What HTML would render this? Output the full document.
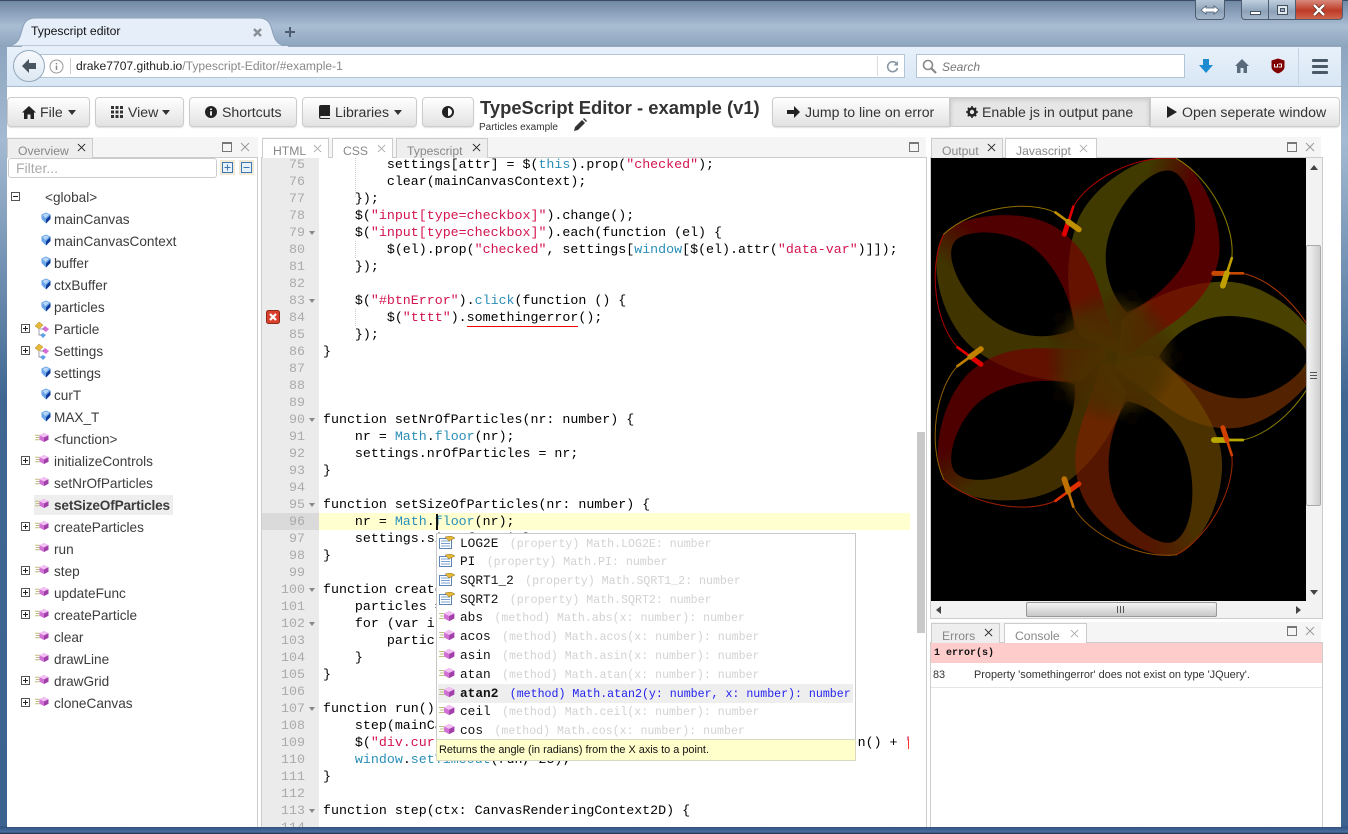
<!DOCTYPE html>
<html><head><meta charset="utf-8"><title>Typescript editor</title>
<style>
*{box-sizing:border-box}
html,body{margin:0;padding:0}
body{width:1348px;height:834px;overflow:hidden;position:relative;background:#fff;font-family:"Liberation Sans",sans-serif;color:#333}
.a,.a *{position:absolute}
div,span.a,svg{position:absolute}
.btn{top:97px;height:30px;background:linear-gradient(#fff,#e2e2e2);border:1px solid #ccc;border-radius:4px;font-size:14.1px;line-height:28px;color:#333;white-space:nowrap;box-shadow:0 1px 1px rgba(0,0,0,.12)}
.btn span{position:absolute;top:0}
.tab{top:138px;height:20px;background:#fff;border:1px solid #ccc;border-bottom:0;font-size:12.2px;line-height:24px;color:#888;padding-left:10px;white-space:nowrap}
.tab.on{background:#eee}
.x{position:absolute;top:3px;font-size:0}
.code,.code div{font-family:"Liberation Mono",monospace;font-size:13.3px;line-height:17px;white-space:pre;color:#000}
.ln{left:262px;width:43px;margin-top:-1px;text-align:right;font-family:"Liberation Mono",monospace;font-size:13.3px;line-height:17px;color:#aaa}
.s{color:#d3144f}.t{color:#2a8fb8}
.tr{left:54px;margin-top:1px;font-size:13.6px;line-height:18px;color:#3c3c3c;white-space:nowrap}
.row{left:438px;width:415px;height:19px;font-family:"Liberation Mono",monospace;font-size:12.8px;line-height:19px;white-space:pre;color:#111}
.row i{font-style:normal;font-size:11.6px;color:#d2d2d2;margin-left:-4px}
.row span{left:22px;top:0;position:absolute}
</style></head><body>
<svg width="0" height="0" style="position:absolute">
<defs>
<symbol id="var" viewBox="0 0 10 12"><path d="M5 .5L9.5 2.5V7L5 11.5 .5 7V2.5Z" fill="#6aa6e8"/><path d="M9.5 3V7L5 11.5V7.5Z" fill="#0d3a96"/><path d="M1.5 3L5 1.5 8 2.8 4.5 6Z" fill="#b8d6f7"/></symbol>
<symbol id="meth" viewBox="0 0 20 14"><path d="M0 4H6M1 7H6M0 10H6" stroke="#bdbd80" stroke-width="1.2"/><path d="M12 1L18 4V10L12 13 6 10V4Z" fill="#d070d4"/><path d="M12 1L18 4 12 7 6 4Z" fill="#f2c0f2"/><path d="M12 7L18 4V10L12 13Z" fill="#a040a8"/></symbol>
<symbol id="cls" viewBox="0 0 16 16"><path d="M1 4L5 0 9 3 5 7Z" fill="#e5b83a" stroke="#a88520" stroke-width=".5"/><path d="M11 4L15 7 12 10 8 7Z" fill="#d66bd6"/><path d="M9 11L12 13 9 16 6 13Z" fill="#5f9fe5"/><path d="M5 7V13H7M6 7L10 7" stroke="#778" stroke-width=".7" fill="none"/></symbol>
<symbol id="prop" viewBox="0 0 16 13"><rect x=".5" y="2.5" width="12" height="10" fill="#fff" stroke="#5c85b5"/><path d="M2 5H11M2 7.5H11M2 10H11" stroke="#7aa0cf" stroke-width="1"/><path d="M6 1L12 0 16 2 10 5Z" fill="#e5b83a" stroke="#8a6d18" stroke-width=".5"/></symbol>
<symbol id="plus" viewBox="0 0 9 9"><rect x=".5" y=".5" width="8" height="8" fill="#fff" stroke="#555"/><path d="M2 4.5H7M4.5 2V7" stroke="#222"/></symbol>
<symbol id="minus" viewBox="0 0 9 9"><rect x=".5" y=".5" width="8" height="8" fill="#fff" stroke="#555"/><path d="M2 4.5H7" stroke="#222"/></symbol>
<symbol id="xx" viewBox="0 0 10 10"><path d="M1 1L9 9M9 1L1 9" stroke="currentColor" stroke-width="1" fill="none"/></symbol>
<symbol id="max" viewBox="0 0 10 10"><rect x=".5" y=".5" width="9" height="9" fill="none" stroke="#777"/><path d="M0 1.5H10" stroke="#777"/></symbol>
<linearGradient id="g0" gradientUnits="userSpaceOnUse" x1="0" y1="-70" x2="0" y2="70"><stop offset="0" stop-color="#6a6000"/><stop offset="1" stop-color="#7a3200"/></linearGradient>
<linearGradient id="g1" gradientUnits="userSpaceOnUse" x1="0" y1="-70" x2="0" y2="70"><stop offset="0" stop-color="#5f5400"/><stop offset="1" stop-color="#7c0000"/></linearGradient>
<linearGradient id="g2" gradientUnits="userSpaceOnUse" x1="0" y1="-70" x2="0" y2="70"><stop offset="0" stop-color="#5e4c00"/><stop offset="1" stop-color="#760000"/></linearGradient>
<linearGradient id="g3" gradientUnits="userSpaceOnUse" x1="0" y1="-70" x2="0" y2="70"><stop offset="0" stop-color="#604400"/><stop offset="1" stop-color="#720000"/></linearGradient>
<linearGradient id="g4" gradientUnits="userSpaceOnUse" x1="0" y1="-70" x2="0" y2="70"><stop offset="0" stop-color="#6e4800"/><stop offset="1" stop-color="#7c2000"/></linearGradient>
<radialGradient id="cg"><stop offset="0" stop-color="#4a3400" stop-opacity=".95"/><stop offset=".7" stop-color="#463000" stop-opacity=".7"/><stop offset="1" stop-color="#3a2a00" stop-opacity="0"/></radialGradient>
<path id="petal" fill-rule="evenodd" d="M30-110C120-190 240-225 340-225 470-225 625-90 625 0 625 70 480 215 350 215 270 215 210 185 150 140 110 110 60 70 10 40ZM140 0C180-70 260-122 350-122 460-122 585-60 585 0 585 50 480 125 390 125 300 125 200 70 140 0Z"/>
</defs></svg>

<!-- window chrome -->
<div style="left:0;top:0;width:1348px;height:834px;background:linear-gradient(#6f86a2 0,#a9bdd3 26px,#8ea5bf 46px,#a4bad2 140px,#3f6792 400px,#3c6290 826px,#2f5280 827px,#4a6fa0 832px,#1a2a40 834px)"></div>
<div style="left:0;top:0;width:1348px;height:1px;background:#3c4d63"></div>
<!-- title tab -->
<svg style="left:0;top:0" width="300" height="47"><path d="M6 46C18 46 20 38 22 30 24 22 27 18 36 18H258C267 18 270 22 272 30 274 38 276 46 288 46Z" fill="#e6eff9" stroke="#8ba1b9"/></svg>
<div class="a" style="left:31px;top:23px;font-size:12.2px;line-height:16px;color:#111;white-space:nowrap">Typescript editor</div>
<svg style="left:252px;top:27px;color:#888" width="11" height="11"><path d="M2 2L9 9M9 2L2 9" stroke="#8a8f96" stroke-width="2.4"/></svg>
<svg style="left:284px;top:26px" width="12" height="12"><path d="M6 1V11M1 6H11" stroke="#4d5c6e" stroke-width="2"/></svg>
<!-- window buttons -->
<div style="left:1195px;top:0;width:30px;height:20px;background:linear-gradient(#b5c5d6,#8da2b8 60%,#a5b7c9);border:1px solid #4c5d70;border-top:0;border-radius:0 0 4px 4px"></div>
<svg style="left:1200px;top:4px" width="20" height="12"><path d="M1 6L6 2V4H14V2L19 6 14 10V8H6V10Z" fill="#fff" stroke="#4c5d70" stroke-width=".8"/></svg>
<div style="left:1241px;top:0;width:28px;height:20px;background:linear-gradient(#c0cfdf,#8da2b8 60%,#a5b7c9);border:1px solid #4c5d70;border-top:0;border-radius:0 0 0 4px"></div>
<div style="left:1269px;top:0;width:27px;height:20px;background:linear-gradient(#c0cfdf,#8da2b8 60%,#a5b7c9);border:1px solid #4c5d70;border-top:0;border-left:0"></div>
<div style="left:1296px;top:0;width:47px;height:20px;background:linear-gradient(#d98a7c,#bd3a26 55%,#d0654e);border:1px solid #4c5d70;border-top:0;border-left:0;border-radius:0 0 4px 0"></div>
<div style="left:1250px;top:11px;width:11px;height:4px;background:#fff;border:1px solid #44505e"></div>
<div style="left:1277px;top:5px;width:11px;height:10px;background:#dfe7ef;border:1px solid #44505e"></div>
<div style="left:1280px;top:8px;width:5px;height:4px;background:#9db0c3;border:1px solid #44505e"></div>
<svg style="left:1312px;top:4px" width="14" height="12"><path d="M2 1L12 11M12 1L2 11" stroke="#5a2a22" stroke-width="4"/><path d="M2 1L12 11M12 1L2 11" stroke="#fff" stroke-width="2.4"/></svg>
<!-- nav bar -->
<div style="left:7px;top:46px;width:1334px;height:41px;background:linear-gradient(#e8f1fb,#d8e6f4);border-top:1px solid #94a8be;border-bottom:1px solid #a9bccf"></div>
<div style="left:288px;top:45px;width:1053px;height:1px;background:#8ba1b9"></div>
<div style="left:22px;top:46px;width:266px;height:2px;background:#e6eff9"></div>
<div style="left:40px;top:54px;width:865px;height:24px;background:#fff;border:1px solid #b3c6d8"></div>
<div style="left:13px;top:50px;width:32px;height:32px;border-radius:50%;background:linear-gradient(#f6f9fc,#dde8f3);border:1px solid #93a7bc"></div>
<svg style="left:20px;top:58px" width="17" height="16"><path d="M9 1L2 8 9 15V11H16V5H9Z" fill="#4a5562"/></svg>
<svg style="left:49px;top:59px" width="15" height="15"><circle cx="7.5" cy="7.5" r="6.5" fill="none" stroke="#999"/><path d="M7.5 4V5.4M7.5 6.6V11" stroke="#888" stroke-width="1.5"/></svg>
<div style="left:70px;top:58px;width:1px;height:16px;background:#ccc"></div>
<div class="a" style="left:76px;top:58px;font-size:12.1px;line-height:16px;color:#888;white-space:nowrap"><span style="position:static;color:#222">drake7707.github.io</span>/Typescript-Editor/#example-1</div>
<div style="left:877px;top:56px;width:1px;height:20px;background:#ddd"></div>
<svg style="left:886px;top:60px" width="13" height="13"><path d="M10.5 3.5A5 5 0 1 0 11.5 8" fill="none" stroke="#8a97a5" stroke-width="1.6"/><path d="M12 1V5.5H7.5Z" fill="#8a97a5"/></svg>
<div style="left:916px;top:54px;width:269px;height:24px;background:#fff;border:1px solid #b3c6d8"></div>
<svg style="left:922px;top:59px" width="15" height="15"><circle cx="6" cy="6" r="4.5" fill="none" stroke="#888" stroke-width="1.6"/><path d="M9.5 9.5L14 14" stroke="#888" stroke-width="2.2"/></svg>
<div class="a" style="left:942px;top:59px;font-size:12px;line-height:16px;font-style:italic;color:#777">Search</div>
<svg style="left:1198px;top:58px" width="16" height="16"><path d="M5 1H11V7H15L8 15 1 7H5Z" fill="#1c8bd1"/></svg>
<svg style="left:1234px;top:58px" width="16" height="16"><path d="M8 1L1 8H3V15H6.5V10H9.5V15H13V8H15Z" fill="#5a6a7a"/></svg>
<svg style="left:1271px;top:58px" width="14" height="16"><path d="M7 .5L13.5 2.5V9C13.5 12 10 14.500 7 15.500 4 14.500 .5 12 .5 9V2.500Z" fill="#800000"/><path d="M3.500 6V9H6.500V6M7.500 9H10.500V6H7.500" stroke="#eee" fill="none"/></svg>
<div style="left:1298px;top:48px;width:1px;height:37px;background:#c5d4e3"></div>
<div style="left:1312px;top:59px;width:16px;height:3px;background:#4a5968;border-radius:1px"></div>
<div style="left:1312px;top:65px;width:16px;height:3px;background:#4a5968;border-radius:1px"></div>
<div style="left:1312px;top:71px;width:16px;height:3px;background:#4a5968;border-radius:1px"></div>

<!-- page -->
<div style="left:7px;top:87px;width:1334px;height:740px;background:#fff"></div>
<!-- toolbar -->
<div class="btn" style="left:7px;width:83px"><svg style="left:14px;top:8px" width="14" height="13"><path d="M7 0L0 6.500H2V13H5.500V8.500H8.500V13H12V6.500H14Z" fill="#222"/></svg><span style="left:32px">File</span><svg style="left:60px;top:12px" width="8" height="5"><path d="M0 0H8L4 5Z" fill="#333"/></svg></div>
<div class="btn" style="left:95px;width:89px"><svg style="left:15px;top:8px" width="12" height="12"><path d="M0 0H3V3H0ZM4.500 0H7.500V3H4.500ZM9 0H12V3H9ZM0 4.500H3V7.500H0ZM4.500 4.500H7.500V7.500H4.500ZM9 4.500H12V7.500H9ZM0 9H3V12H0ZM4.500 9H7.500V12H4.500ZM9 9H12V12H9Z" fill="#333"/></svg><span style="left:32px">View</span><svg style="left:66px;top:12px" width="8" height="5"><path d="M0 0H8L4 5Z" fill="#333"/></svg></div>
<div class="btn" style="left:189px;width:108px"><svg style="left:15px;top:8px" width="12" height="12"><circle cx="6" cy="6" r="6" fill="#222"/><path d="M6 2.500V4M6 5.200V9.500" stroke="#fff" stroke-width="1.800"/></svg><span style="left:32px">Shortcuts</span></div>
<div class="btn" style="left:302px;width:115px"><svg style="left:16px;top:7px" width="11" height="14"><path d="M2 0H11V11H2.500C1.500 11 1 11.500 1 12S1.500 13 2.500 13H11V14H2C.8 14 0 13.200 0 12V2C0 .8.800 0 2 0Z" fill="#222"/></svg><span style="left:32px">Libraries</span><svg style="left:91px;top:12px" width="8" height="5"><path d="M0 0H8L4 5Z" fill="#333"/></svg></div>
<div class="btn" style="left:422px;width:52px"><svg style="left:19px;top:8px" width="12" height="12"><circle cx="6" cy="6" r="5" fill="#fff" stroke="#222" stroke-width="2"/><path d="M6 1A5 5 0 0 0 6 11Z" fill="#222"/></svg></div>
<div class="a" style="left:480px;top:96px;font-size:18.4px;line-height:24px;font-weight:bold;color:#333;white-space:nowrap">TypeScript Editor - example (v1)</div>
<div class="a" style="left:479px;top:121px;font-size:10px;line-height:13px;color:#333;white-space:nowrap">Particles example</div>
<svg style="left:573px;top:118px" width="14" height="14"><path d="M1 13L2 9 9 2 12 5 5 12Z" fill="#333"/><path d="M10 1L11 0 14 3 13 4Z" fill="#333"/></svg>
<div class="btn" style="left:772px;width:178px;border-radius:4px 0 0 4px"><svg style="left:14px;top:8px" width="13" height="12"><path d="M7 0L13 6 7 12V8H0V4H7Z" fill="#222"/></svg><span style="left:32px">Jump to line on error</span></div>
<div class="btn" style="left:950px;width:200px;border-radius:0;background:#e6e6e6;box-shadow:inset 0 2px 4px rgba(0,0,0,.12)"><svg style="left:15px;top:8px" width="12" height="12"><circle cx="6" cy="6" r="3.500" fill="none" stroke="#222" stroke-width="2.600"/><path d="M6 0V12M0 6H12M1.800 1.800L10.200 10.200M10.200 1.800L1.800 10.200" stroke="#222" stroke-width="1.500" stroke-dasharray="2 8 2 0"/></svg><span style="left:31px">Enable js in output pane</span></div>
<div class="btn" style="left:1150px;width:190px;border-radius:0 4px 4px 0"><svg style="left:16px;top:8px" width="10" height="12"><path d="M0 0L10 6 0 12Z" fill="#222"/></svg><span style="left:31px">Open seperate window</span></div>

<!-- Overview panel -->
<div style="left:7px;top:137px;width:251px;height:20px;background:#f5f5f5"></div>
<div style="left:7px;top:157px;width:251px;height:670px;background:#fff;border-top:1px solid #ccc;border-right:1px solid #ccc"></div>
<div class="tab on" style="left:7px;width:86px">Overview<svg class="x" style="left:69px;top:4px;color:#222" width="9" height="9"><use href="#xx"/></svg></div>
<svg style="left:222px;top:142px" width="10" height="10"><use href="#max"/></svg>
<svg style="left:240px;top:142px;color:#999" width="10" height="10"><use href="#xx"/></svg>
<div style="left:8px;top:158px;width:209px;height:20px;background:#fff;border:1px solid #ccc;border-radius:3px;font-size:14px;line-height:18px;color:#aaa;padding-left:7px">Filter...</div>
<div style="left:220px;top:160px;width:15px;height:15px;background:#f3ead6"></div><svg style="left:222px;top:162px" width="11" height="11"><rect x=".5" y=".5" width="10" height="10" fill="#e9f1fa" stroke="#3c76b2"/><path d="M2.500 5.500H8.500M5.500 2.500V8.500" stroke="#3c76b2"/></svg>
<div style="left:239px;top:160px;width:15px;height:15px;background:#f3ead6"></div><svg style="left:241px;top:162px" width="11" height="11"><rect x=".5" y=".5" width="10" height="10" fill="#e9f1fa" stroke="#3c76b2"/><path d="M2.500 5.500H8.500" stroke="#3c76b2"/></svg>

<svg style="left:11px;top:192px" width="9" height="9"><use href="#minus"/></svg>
<div class="tr" style="left:45px;top:188px">&lt;global&gt;</div>
<svg style="left:41px;top:212px" width="10" height="12"><use href="#var"/></svg><div class="tr" style="top:210px">mainCanvas</div>
<svg style="left:41px;top:234px" width="10" height="12"><use href="#var"/></svg><div class="tr" style="top:232px">mainCanvasContext</div>
<svg style="left:41px;top:256px" width="10" height="12"><use href="#var"/></svg><div class="tr" style="top:254px">buffer</div>
<svg style="left:41px;top:278px" width="10" height="12"><use href="#var"/></svg><div class="tr" style="top:276px">ctxBuffer</div>
<svg style="left:41px;top:300px" width="10" height="12"><use href="#var"/></svg><div class="tr" style="top:298px">particles</div>
<svg style="left:21px;top:324px" width="9" height="9"><use href="#plus"/></svg><svg style="left:34px;top:322px" width="16" height="16"><use href="#cls"/></svg><div class="tr" style="top:320px">Particle</div>
<svg style="left:21px;top:346px" width="9" height="9"><use href="#plus"/></svg><svg style="left:34px;top:344px" width="16" height="16"><use href="#cls"/></svg><div class="tr" style="top:342px">Settings</div>
<svg style="left:41px;top:366px" width="10" height="12"><use href="#var"/></svg><div class="tr" style="top:364px">settings</div>
<svg style="left:41px;top:388px" width="10" height="12"><use href="#var"/></svg><div class="tr" style="top:386px">curT</div>
<svg style="left:41px;top:410px" width="10" height="12"><use href="#var"/></svg><div class="tr" style="top:408px">MAX_T</div>
<svg style="left:35px;top:432px" width="15" height="11" viewBox="0 0 20 14"><use href="#meth"/></svg><div class="tr" style="top:430px">&lt;function&gt;</div>
<svg style="left:21px;top:456px" width="9" height="9"><use href="#plus"/></svg><svg style="left:35px;top:454px" width="15" height="11" viewBox="0 0 20 14"><use href="#meth"/></svg><div class="tr" style="top:452px">initializeControls</div>
<svg style="left:35px;top:476px" width="15" height="11" viewBox="0 0 20 14"><use href="#meth"/></svg><div class="tr" style="top:474px">setNrOfParticles</div>
<div style="left:34px;top:495px;width:139px;height:20px;background:#eee"></div>
<svg style="left:35px;top:498px" width="15" height="11" viewBox="0 0 20 14"><use href="#meth"/></svg><div class="tr" style="top:496px;font-weight:bold;letter-spacing:-.15px">setSizeOfParticles</div>
<svg style="left:21px;top:522px" width="9" height="9"><use href="#plus"/></svg><svg style="left:35px;top:520px" width="15" height="11" viewBox="0 0 20 14"><use href="#meth"/></svg><div class="tr" style="top:518px">createParticles</div>
<svg style="left:35px;top:542px" width="15" height="11" viewBox="0 0 20 14"><use href="#meth"/></svg><div class="tr" style="top:540px">run</div>
<svg style="left:21px;top:566px" width="9" height="9"><use href="#plus"/></svg><svg style="left:35px;top:564px" width="15" height="11" viewBox="0 0 20 14"><use href="#meth"/></svg><div class="tr" style="top:562px">step</div>
<svg style="left:21px;top:588px" width="9" height="9"><use href="#plus"/></svg><svg style="left:35px;top:586px" width="15" height="11" viewBox="0 0 20 14"><use href="#meth"/></svg><div class="tr" style="top:584px">updateFunc</div>
<svg style="left:21px;top:610px" width="9" height="9"><use href="#plus"/></svg><svg style="left:35px;top:608px" width="15" height="11" viewBox="0 0 20 14"><use href="#meth"/></svg><div class="tr" style="top:606px">createParticle</div>
<svg style="left:35px;top:630px" width="15" height="11" viewBox="0 0 20 14"><use href="#meth"/></svg><div class="tr" style="top:628px">clear</div>
<svg style="left:35px;top:652px" width="15" height="11" viewBox="0 0 20 14"><use href="#meth"/></svg><div class="tr" style="top:650px">drawLine</div>
<svg style="left:21px;top:676px" width="9" height="9"><use href="#plus"/></svg><svg style="left:35px;top:674px" width="15" height="11" viewBox="0 0 20 14"><use href="#meth"/></svg><div class="tr" style="top:672px">drawGrid</div>
<svg style="left:21px;top:698px" width="9" height="9"><use href="#plus"/></svg><svg style="left:35px;top:696px" width="15" height="11" viewBox="0 0 20 14"><use href="#meth"/></svg><div class="tr" style="top:694px">cloneCanvas</div>

<!-- Editor panel -->
<div style="left:262px;top:137px;width:664px;height:20px;background:#f5f5f5"></div>
<div style="left:261px;top:157px;width:666px;height:670px;background:#fff;border-top:1px solid #ccc;border-left:1px solid #ccc;border-right:1px solid #ccc"></div>
<div class="tab" style="left:262px;width:67px">HTML<svg class="x" style="left:50px;top:5px;color:#aaa" width="9" height="9"><use href="#xx"/></svg></div>
<div class="tab" style="left:332px;width:61px">CSS<svg class="x" style="left:44px;top:5px;color:#aaa" width="9" height="9"><use href="#xx"/></svg></div>
<div class="tab on" style="left:396px;width:92px">Typescript<svg class="x" style="left:75px;top:4px;color:#222" width="9" height="9"><use href="#xx"/></svg></div>
<svg style="left:909px;top:142px" width="10" height="10"><use href="#max"/></svg>
<div style="left:262px;top:158px;width:57px;height:669px;background:#ebebeb"></div>
<div style="left:262px;top:513px;width:57px;height:17px;background:#dadada"></div>
<div style="left:319px;top:513px;width:591px;height:17px;background:#ffffd0"></div>
<div style="left:917px;top:432px;width:8px;height:201px;background:#c8c8c8"></div>
<svg style="left:266px;top:310px" width="14" height="14"><rect x=".5" y=".5" width="13" height="13" rx="2" fill="#d9402c" stroke="#8e2a1c"/><path d="M4 4L10 10M10 4L4 10" stroke="#fff" stroke-width="2.200"/></svg>
<div style="left:355px;top:158px;width:1px;height:39px;border-left:1px dotted #ccc"></div>
<div style="left:355px;top:241px;width:1px;height:17px;border-left:1px dotted #ccc"></div>
<div style="left:355px;top:309px;width:1px;height:17px;border-left:1px dotted #ccc"></div>

<div class="ln" style="top:157px">75</div><div class="ln" style="top:174px">76</div><div class="ln" style="top:191px">77</div><div class="ln" style="top:208px">78</div><div class="ln" style="top:225px">79</div><div class="ln" style="top:242px">80</div><div class="ln" style="top:259px">81</div><div class="ln" style="top:276px">82</div><div class="ln" style="top:293px">83</div><div class="ln" style="top:310px">84</div><div class="ln" style="top:327px">85</div><div class="ln" style="top:344px">86</div><div class="ln" style="top:361px">87</div><div class="ln" style="top:378px">88</div><div class="ln" style="top:395px">89</div><div class="ln" style="top:412px">90</div><div class="ln" style="top:429px">91</div><div class="ln" style="top:446px">92</div><div class="ln" style="top:463px">93</div><div class="ln" style="top:480px">94</div><div class="ln" style="top:497px">95</div><div class="ln" style="top:514px">96</div><div class="ln" style="top:531px">97</div><div class="ln" style="top:548px">98</div><div class="ln" style="top:565px">99</div><div class="ln" style="top:582px">100</div><div class="ln" style="top:599px">101</div><div class="ln" style="top:616px">102</div><div class="ln" style="top:633px">103</div><div class="ln" style="top:650px">104</div><div class="ln" style="top:667px">105</div><div class="ln" style="top:684px">106</div><div class="ln" style="top:701px">107</div><div class="ln" style="top:718px">108</div><div class="ln" style="top:735px">109</div><div class="ln" style="top:752px">110</div><div class="ln" style="top:769px">111</div><div class="ln" style="top:786px">112</div><div class="ln" style="top:803px">113</div><div class="ln" style="top:820px;height:8px;overflow:hidden">114</div>
<svg style="left:309px;top:231px" width="7" height="4"><path d="M0 0H6L3 4Z" fill="#888"/></svg>
<svg style="left:309px;top:299px" width="7" height="4"><path d="M0 0H6L3 4Z" fill="#888"/></svg>
<svg style="left:309px;top:418px" width="7" height="4"><path d="M0 0H6L3 4Z" fill="#888"/></svg>
<svg style="left:309px;top:503px" width="7" height="4"><path d="M0 0H6L3 4Z" fill="#888"/></svg>
<svg style="left:309px;top:588px" width="7" height="4"><path d="M0 0H6L3 4Z" fill="#888"/></svg>
<svg style="left:309px;top:622px" width="7" height="4"><path d="M0 0H6L3 4Z" fill="#888"/></svg>
<svg style="left:309px;top:707px" width="7" height="4"><path d="M0 0H6L3 4Z" fill="#888"/></svg>
<svg style="left:309px;top:809px" width="7" height="4"><path d="M0 0H6L3 4Z" fill="#888"/></svg>

<div class="code" style="left:323px;top:157px;width:587px;height:670px;overflow:hidden">
<div style="top:-1px">        settings[attr] = $(<span class="t">this</span>).prop(<span class="s">"checked"</span>);</div>
<div style="top:16px">        clear(mainCanvasContext);</div>
<div style="top:33px">    });</div>
<div style="top:50px">    $(<span class="s">"input[type=checkbox]"</span>).change();</div>
<div style="top:67px">    $(<span class="s">"input[type=checkbox]"</span>).each(function (el) {</div>
<div style="top:84px">        $(el).prop(<span class="s">"checked"</span>, settings[<span class="t">window</span>[$(el).attr(<span class="s">"data-var"</span>)]]);</div>
<div style="top:101px">    });</div>
<div style="top:135px">    $(<span class="s">"#btnError"</span>).<span class="t">click</span>(function () {</div>
<div style="top:152px">        $(<span class="s">"tttt"</span>).somethingerror();</div>
<div style="top:169px">    });</div>
<div style="top:186px">}</div>
<div style="top:254px">function setNrOfParticles(nr: number) {</div>
<div style="top:271px">    nr = <span class="t">Math</span>.<span class="t">floor</span>(nr);</div>
<div style="top:288px">    settings.nrOfParticles = nr;</div>
<div style="top:305px">}</div>
<div style="top:339px">function setSizeOfParticles(nr: number) {</div>
<div style="top:356px">    nr = <span class="t">Math</span>.<span class="t">floor</span>(nr);</div>
<div style="top:373px">    settings.sizeOfParticles = nr;</div>
<div style="top:390px">}</div>
<div style="top:424px">function createParticles(</div>
<div style="top:441px">    particles = [];</div>
<div style="top:458px">    for (var i = 0;</div>
<div style="top:475px">        particles.push(createParticle());</div>
<div style="top:492px">    }</div>
<div style="top:509px">}</div>
<div style="top:543px">function run() {</div>
<div style="top:560px">    step(mainCanvasContext);</div>
<div style="top:577px">    $(<span class="s">"div.cur</span>                                                     n() + <span class="s">"</span></div>
<div style="top:594px">    <span class="t">window</span>.<span class="t">setTimeout</span>(run, 25);</div>
<div style="top:611px">}</div>
<div style="top:645px">function step(ctx: CanvasRenderingContext2D) {</div>
</div>
<div style="left:467px;top:326px;width:111px;height:1px;background:#e00"></div>
<div style="left:436px;top:514px;width:2px;height:16px;background:#111"></div>
<div style="left:908px;top:739px;width:1px;height:10px;background:#f33"></div>

<!-- suggest popup -->
<div style="left:436px;top:533px;width:420px;height:228px;background:#fff;border:1px solid #c8c8c8"></div>
<div class="row" style="top:534px"><svg style="left:1px;top:2px" width="16" height="13"><use href="#prop"/></svg><span>LOG2E  <i>(property) Math.LOG2E: number</i></span></div>
<div class="row" style="top:552px"><svg style="left:1px;top:2px" width="16" height="13"><use href="#prop"/></svg><span>PI  <i>(property) Math.PI: number</i></span></div>
<div class="row" style="top:571px"><svg style="left:1px;top:2px" width="16" height="13"><use href="#prop"/></svg><span>SQRT1_2  <i>(property) Math.SQRT1_2: number</i></span></div>
<div class="row" style="top:590px"><svg style="left:1px;top:2px" width="16" height="13"><use href="#prop"/></svg><span>SQRT2  <i>(property) Math.SQRT2: number</i></span></div>
<div class="row" style="top:608px"><svg style="left:1px;top:2px" width="17" height="12" viewBox="0 0 20 14"><use href="#meth"/></svg><span>abs  <i>(method) Math.abs(x: number): number</i></span></div>
<div class="row" style="top:627px"><svg style="left:1px;top:2px" width="17" height="12" viewBox="0 0 20 14"><use href="#meth"/></svg><span>acos  <i>(method) Math.acos(x: number): number</i></span></div>
<div class="row" style="top:646px"><svg style="left:1px;top:2px" width="17" height="12" viewBox="0 0 20 14"><use href="#meth"/></svg><span>asin  <i>(method) Math.asin(x: number): number</i></span></div>
<div class="row" style="top:665px"><svg style="left:1px;top:2px" width="17" height="12" viewBox="0 0 20 14"><use href="#meth"/></svg><span>atan  <i>(method) Math.atan(x: number): number</i></span></div>
<div class="row" style="top:684px;background:#eee"><svg style="left:1px;top:2px" width="17" height="12" viewBox="0 0 20 14"><use href="#meth"/></svg><span style="font-weight:bold">atan2  <i style="color:#2222ee;font-weight:normal">(method) Math.atan2(y: number, x: number): number</i></span></div>
<div class="row" style="top:702px"><svg style="left:1px;top:2px" width="17" height="12" viewBox="0 0 20 14"><use href="#meth"/></svg><span>ceil  <i>(method) Math.ceil(x: number): number</i></span></div>
<div class="row" style="top:721px"><svg style="left:1px;top:2px" width="17" height="12" viewBox="0 0 20 14"><use href="#meth"/></svg><span>cos  <i>(method) Math.cos(x: number): number</i></span></div>
<div style="left:436px;top:739px;width:420px;height:22px;background:#ffffcc;border:1px solid #d8d8c0;font-size:10.9px;line-height:20px;color:#111;padding-left:2px;white-space:nowrap">Returns the angle (in radians) from the X axis to a point.</div>

<!-- Output panel -->
<div style="left:931px;top:137px;width:390px;height:20px;background:#f5f5f5"></div>
<div style="left:930px;top:157px;width:393px;height:462px;background:#f2f2f2;border:1px solid #ccc"></div>
<div class="tab on" style="left:931px;width:72px">Output<svg class="x" style="left:55px;top:4px;color:#222" width="9" height="9"><use href="#xx"/></svg></div>
<div class="tab" style="left:1005px;width:92px">Javascript<svg class="x" style="left:73px;top:5px;color:#aaa" width="9" height="9"><use href="#xx"/></svg></div>
<svg style="left:1287px;top:142px" width="10" height="10"><use href="#max"/></svg>
<svg style="left:1305px;top:142px;color:#999" width="10" height="10"><use href="#xx"/></svg>
<svg style="left:931px;top:158px;background:#000" width="375" height="443" viewBox="18 54 1122 1329">
<g fill-opacity=".68">
<use href="#petal" fill="url(#g0)" transform="translate(560 650)"/>
<use href="#petal" fill="url(#g1)" transform="translate(560 650) rotate(-72)"/>
<use href="#petal" fill="url(#g2)" transform="translate(560 650) rotate(-144)"/>
<use href="#petal" fill="url(#g3)" transform="translate(560 650) rotate(144)"/>
<use href="#petal" fill="url(#g4)" transform="translate(560 650) rotate(72)"/>
</g>
<circle cx="560" cy="650" r="200" fill="url(#cg)"/>
<g fill="#060300"><circle cx="620" cy="465" r="18"/><circle cx="402" cy="535" r="18"/><circle cx="402" cy="765" r="18"/><circle cx="620" cy="835" r="18"/><circle cx="755" cy="650" r="18"/></g>
<g fill="none" stroke-linecap="round">
<g transform="translate(560 650)"><path d="M390-250C480-235 600-120 625 0" stroke="#b03a00" stroke-width="3"/><path d="M390 250C480 235 600 120 625 0" stroke="#908000" stroke-width="3"/><path d="M305-250H345" stroke="#c84a00" stroke-width="15"/><path d="M345-250H392" stroke="#c84a00" stroke-width="8"/><path d="M305 250H345" stroke="#b8a800" stroke-width="17"/><path d="M345 250H392" stroke="#b8a800" stroke-width="8"/></g>
<g transform="translate(560 650) rotate(-72)"><path d="M390-250C480-235 600-120 625 0" stroke="#b00000" stroke-width="3"/><path d="M390 250C480 235 600 120 625 0" stroke="#908000" stroke-width="3"/><path d="M305-250H345" stroke="#e00000" stroke-width="15"/><path d="M345-250H392" stroke="#e00000" stroke-width="8"/><path d="M305 250H345" stroke="#c0a000" stroke-width="17"/><path d="M345 250H392" stroke="#c0a000" stroke-width="8"/></g>
<g transform="translate(560 650) rotate(-144)"><path d="M390-250C480-235 600-120 625 0" stroke="#b00000" stroke-width="3"/><path d="M390 250C480 235 600 120 625 0" stroke="#907000" stroke-width="3"/><path d="M305-250H345" stroke="#e00000" stroke-width="15"/><path d="M345-250H392" stroke="#e00000" stroke-width="8"/><path d="M305 250H345" stroke="#c09000" stroke-width="17"/><path d="M345 250H392" stroke="#c09000" stroke-width="8"/></g>
<g transform="translate(560 650) rotate(144)"><path d="M390-250C480-235 600-120 625 0" stroke="#a02000" stroke-width="3"/><path d="M390 250C480 235 600 120 625 0" stroke="#906000" stroke-width="3"/><path d="M305-250H345" stroke="#e03000" stroke-width="15"/><path d="M345-250H392" stroke="#e03000" stroke-width="8"/><path d="M305 250H345" stroke="#c08000" stroke-width="17"/><path d="M345 250H392" stroke="#c08000" stroke-width="8"/></g>
<g transform="translate(560 650) rotate(72)"><path d="M390-250C480-235 600-120 625 0" stroke="#a02800" stroke-width="3"/><path d="M390 250C480 235 600 120 625 0" stroke="#905000" stroke-width="3"/><path d="M305-250H345" stroke="#d04000" stroke-width="15"/><path d="M345-250H392" stroke="#d04000" stroke-width="8"/><path d="M305 250H345" stroke="#c07000" stroke-width="17"/><path d="M345 250H392" stroke="#c07000" stroke-width="8"/></g>
</g>
</svg>
<!-- scrollbars -->
<svg style="left:1310px;top:165px" width="8" height="5"><path d="M0 5H8L4 0Z" fill="#444"/></svg>
<svg style="left:1310px;top:590px" width="8" height="5"><path d="M0 0H8L4 5Z" fill="#444"/></svg>
<div style="left:1306px;top:245px;width:15px;height:261px;background:linear-gradient(90deg,#f4f4f4,#cfcfcf);border:1px solid #aaa;border-radius:2px"></div>
<div style="left:1310px;top:372px;width:7px;height:7px;border-top:1px solid #555;border-bottom:1px solid #555"></div>
<div style="left:1310px;top:375px;width:7px;height:1px;background:#555"></div>
<svg style="left:936px;top:606px" width="5" height="8"><path d="M5 0V8L0 4Z" fill="#444"/></svg>
<svg style="left:1296px;top:606px" width="5" height="8"><path d="M0 0V8L5 4Z" fill="#444"/></svg>
<div style="left:1026px;top:602px;width:191px;height:15px;background:linear-gradient(#f4f4f4,#c8c8c8);border:1px solid #999;border-radius:2px"></div>
<div style="left:1117px;top:606px;width:7px;height:7px;border-left:1px solid #555;border-right:1px solid #555"></div>
<div style="left:1120px;top:606px;width:1px;height:7px;background:#555"></div>

<!-- Errors panel -->
<div style="left:931px;top:622px;width:390px;height:21px;background:#f5f5f5"></div>
<div style="left:930px;top:642px;width:393px;height:185px;background:#fff;border:1px solid #ccc;border-bottom:0"></div>
<div class="tab on" style="left:931px;top:623px;width:69px">Errors<svg class="x" style="left:52px;top:4px;color:#222" width="9" height="9"><use href="#xx"/></svg></div>
<div class="tab" style="left:1004px;top:623px;width:83px">Console<svg class="x" style="left:65px;top:5px;color:#aaa" width="9" height="9"><use href="#xx"/></svg></div>
<svg style="left:1287px;top:626px" width="10" height="10"><use href="#max"/></svg>
<svg style="left:1305px;top:626px;color:#999" width="10" height="10"><use href="#xx"/></svg>
<div style="left:931px;top:643px;width:391px;height:20px;background:#ffcccc;font-family:'Liberation Mono',monospace;font-weight:bold;font-size:10px;line-height:21px;color:#111;padding-left:3px">1 error(s)</div>
<div class="a" style="left:933px;top:668px;font-size:10.9px;line-height:14px;color:#333">83</div>
<div class="a" style="left:974px;top:668px;font-size:10.9px;line-height:14px;color:#333;white-space:nowrap">Property 'somethingerror' does not exist on type 'JQuery'.</div>
<div style="left:931px;top:687px;width:391px;height:1px;background:#e5e5e5"></div>
</body></html>
